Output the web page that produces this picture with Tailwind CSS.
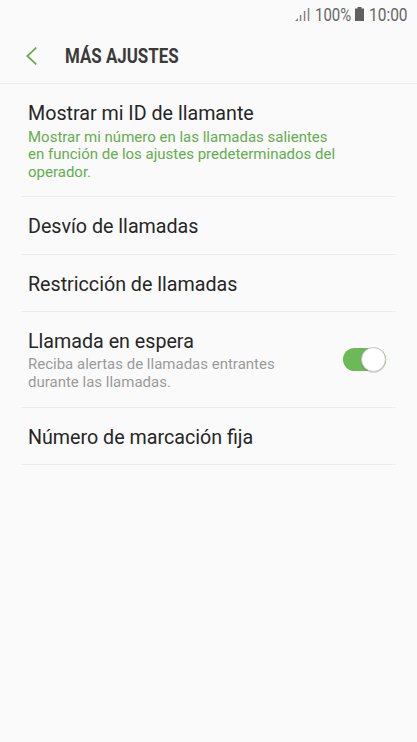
<!DOCTYPE html>
<html lang="es">

<head>
    <meta charset="UTF-8">
    <meta name="viewport" content="width=device-width, initial-scale=1.0">
    <title>Más ajustes</title>
    <script src="https://cdn.jsdelivr.net/npm/@tailwindcss/browser@4"></script>
</head>

<body class="h-screen overflow-hidden bg-[#fafafa] font-['Roboto',sans-serif] text-[#262626]">
    <!-- Status bar -->
    <div class="flex h-7 items-center pl-[295px] text-[18px] text-[#666666]">
        <svg class="h-4 w-[15px] shrink-0" viewBox="0 0 15 16" fill="#858585">
            <path d="M0 15L3 12V15Z" />
            <rect x="4.8" y="9" width="1.5" height="6" />
            <rect x="8.8" y="5" width="1.5" height="10" />
            <rect x="12.8" y="2" width="1.5" height="13" />
        </svg>
        <span class="ml-[5px] w-9 shrink-0 origin-left scale-x-[.83] whitespace-nowrap">100%</span>
        <svg class="ml-1 h-[14px] w-[9px] shrink-0" viewBox="0 0 9 14" fill="#606060">
            <path d="M2.5 0H6.5V1.5H9V14H0V1.5H2.5Z" />
        </svg>
        <span class="ml-[5px] w-10 shrink-0 origin-left scale-x-[.86] whitespace-nowrap">10:00</span>
    </div>

    <header class="flex h-14 items-center border-b border-[#ececec] pl-[26px]">
        <svg class="h-[18px] w-[11px]" viewBox="0 0 11 18" fill="none" stroke="#65ad4e" stroke-width="1.8">
            <path d="M10.3 0.7L1.3 9L10.3 17.3" />
        </svg>
        <h1 class="mt-px ml-7 origin-left scale-x-[.845] text-[20px] font-bold whitespace-nowrap text-[#3a3a3a]">MÁS AJUSTES</h1>
    </header>

    <main class="mr-[21px] ml-[21px]">
        <div class="h-[113px] border-b border-[#ececec] pt-[17px] pl-[7px]">
            <h2 class="origin-left scale-x-[.983] text-[20px] leading-6">Mostrar mi ID de llamante</h2>
            <p class="mt-[3.5px] text-[15px] leading-[17.5px] text-[#65ad4e]">
                Mostrar mi número en las llamadas salientes<br>
                en función de los ajustes predeterminados del<br>
                operador.
            </p>
        </div>
        <div class="flex h-[58px] items-center border-b border-[#ececec] pl-[7px]">
            <h2 class="origin-left scale-x-[.983] text-[20px] leading-6">Desvío de llamadas</h2>
        </div>
        <div class="flex h-[57px] items-center border-b border-[#ececec] pt-px pl-[7px]">
            <h2 class="origin-left scale-x-[.983] text-[20px] leading-6">Restricción de llamadas</h2>
        </div>
        <div class="flex h-24 items-center justify-between border-b border-[#ececec] pr-[9px] pl-[7px]">
            <div class="pt-px">
                <h2 class="origin-left scale-x-[.983] text-[20px] leading-6">Llamada en espera</h2>
                <p class="mt-[3.5px] text-[15px] leading-[17.5px] text-[#9a9a9a]">
                    Reciba alertas de llamadas entrantes<br>
                    durante las llamadas.
                </p>
            </div>
            <div class="mr-px flex h-[23px] w-[43px] items-center justify-end rounded-full bg-[#6cb958]">
                <div class="size-[25px] shrink-0 rounded-full border border-[#c4c4c4] bg-white shadow-[0_1px_1px_rgba(0,0,0,0.15)]"></div>
            </div>
        </div>
        <div class="flex h-[57px] items-center border-b border-[#ececec] pt-px pl-[7px]">
            <h2 class="origin-left scale-x-[.983] text-[20px] leading-6">Número de marcación fija</h2>
        </div>
    </main>
</body>

</html>
